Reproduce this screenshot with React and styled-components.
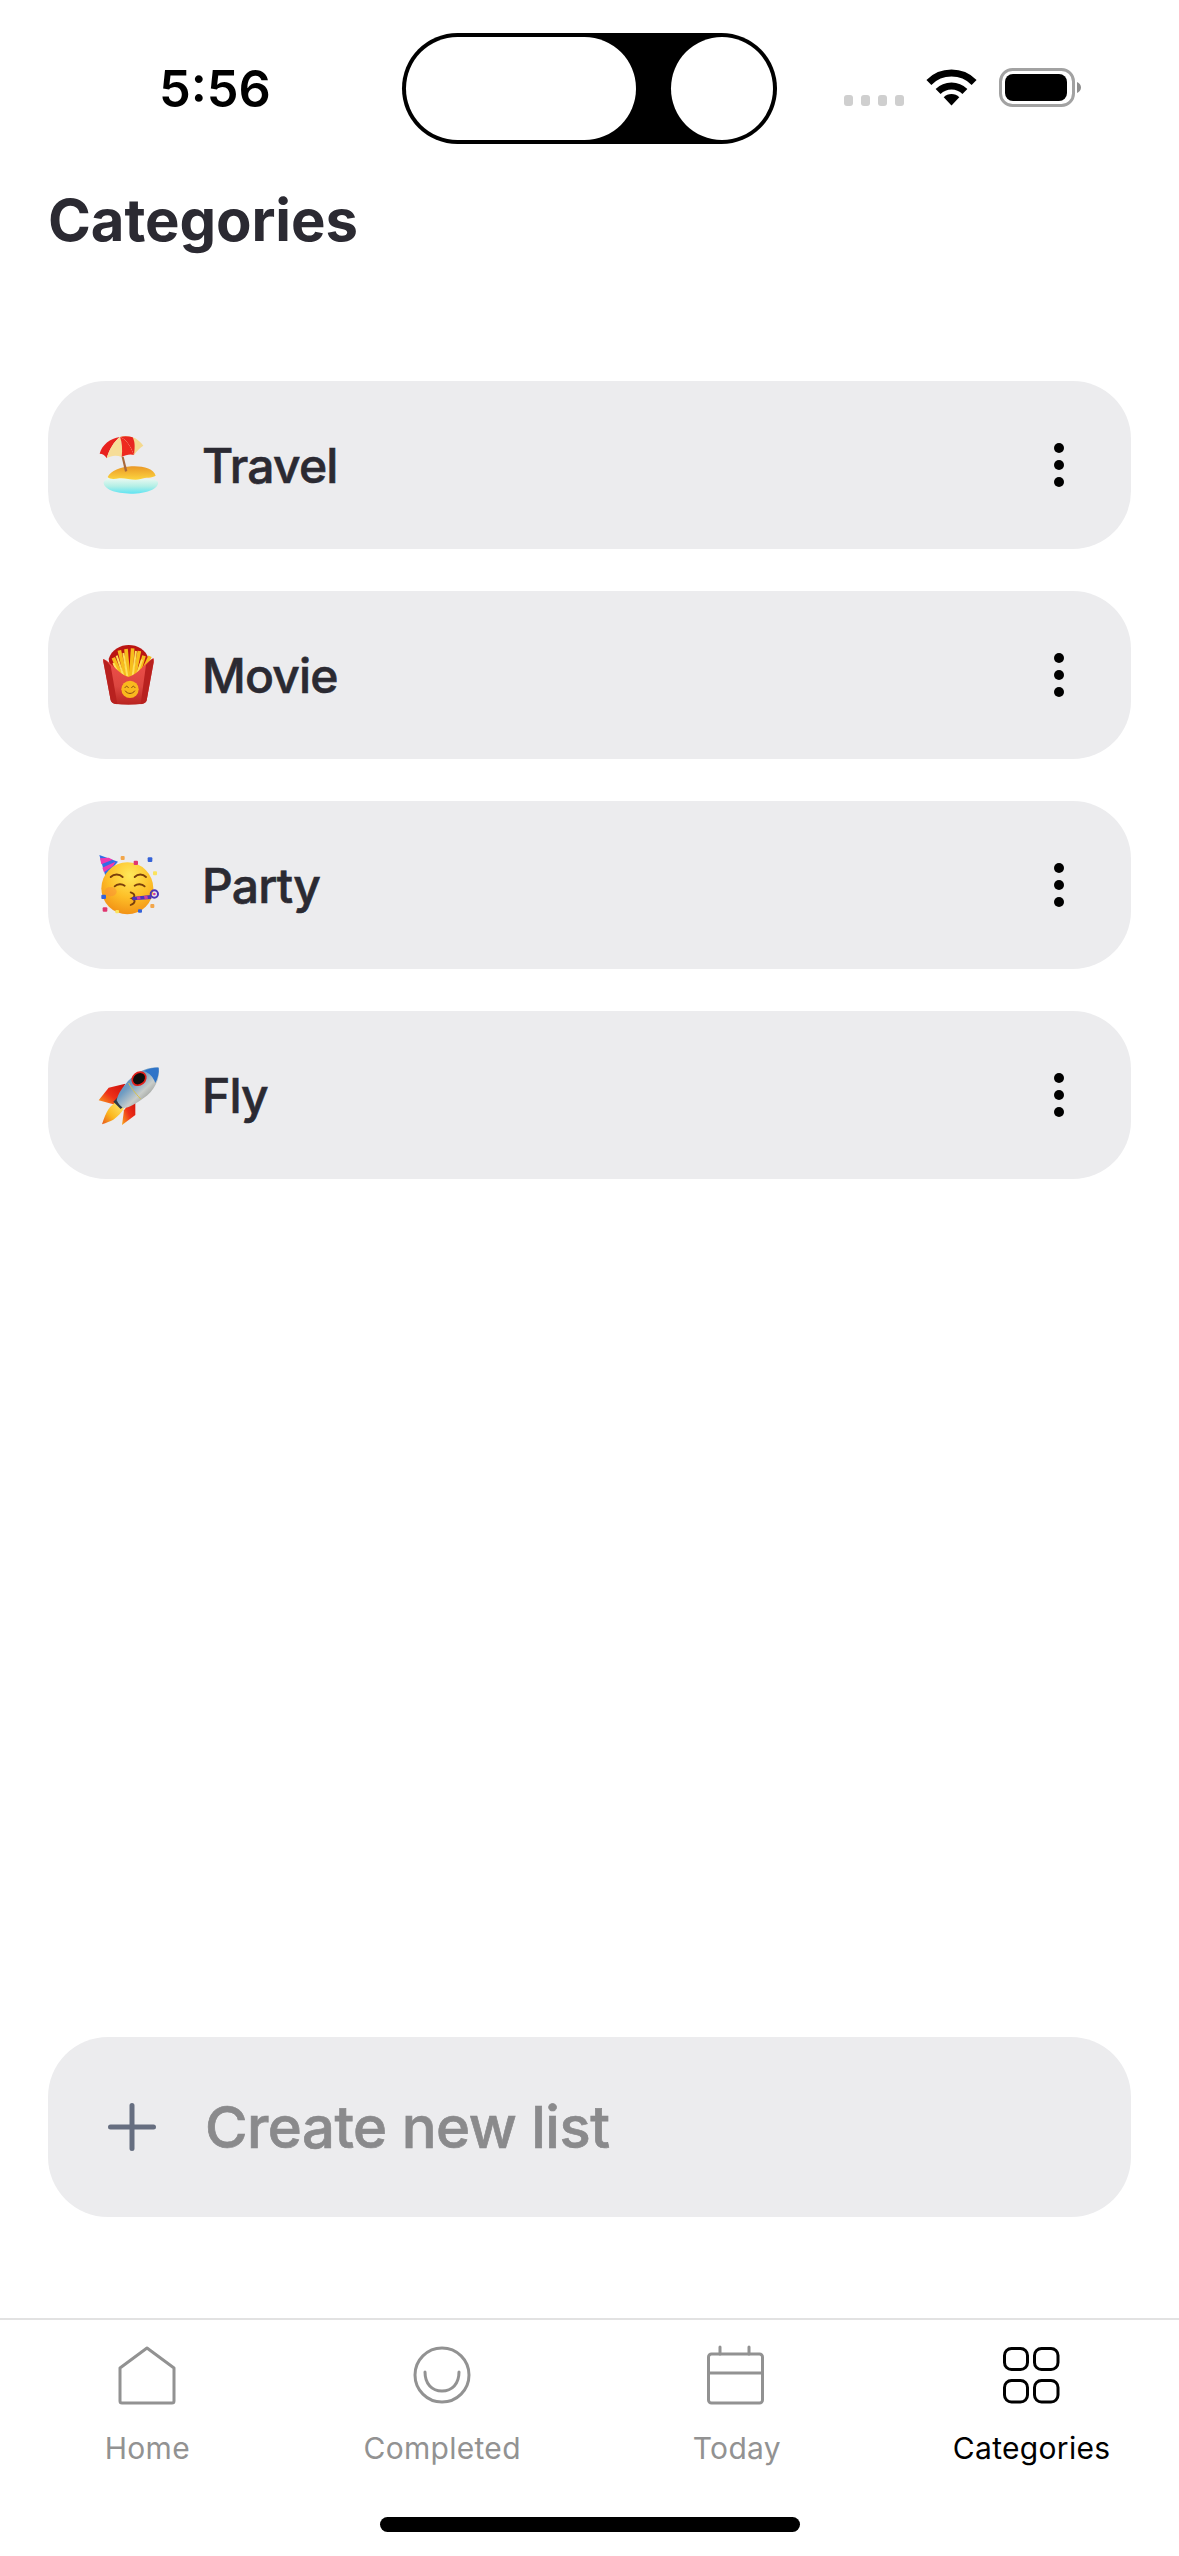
import React from "react";
import styled, { createGlobalStyle } from "styled-components";

const GlobalStyle = createGlobalStyle`
  html, body {
    margin: 0;
    padding: 0;
    background: #ffffff;
  }
  * {
    box-sizing: border-box;
  }
`;

const Page = styled.div`
  width: 1179px;
  height: 2556px;
  display: flex;
  flex-direction: column;
  background: #ffffff;
  font-family: Inter, "Liberation Sans", sans-serif;
  overflow: hidden;
`;

const StatusBar = styled.div`
  display: grid;
  grid-template-columns: 402px 375px 402px;
  height: 111px;
  margin-top: 33px;
  flex-shrink: 0;
`;

const Time = styled.div`
  align-self: center;
  padding-left: 159px;
  font-size: 50.5px;
  font-weight: 600;
  line-height: 60px;
  color: #000000;
`;

const Island = styled.div`
  display: flex;
  justify-content: space-between;
  padding: 4px;
  border-radius: 56px;
  background: #000000;
`;

const IslandPill = styled.div`
  width: 230px;
  border-radius: 52px;
  background: #ffffff;
`;

const IslandDot = styled.div`
  width: 102px;
  border-radius: 50%;
  background: #ffffff;
`;

const StatusIcons = styled.div`
  display: flex;
  align-items: flex-end;
  justify-content: flex-end;
  padding: 0 98px 37px 0;
`;

const Signal = styled.div`
  display: flex;
  gap: 8px;
  margin-right: 22px;
  margin-bottom: 1px;
`;

const SignalBar = styled.span`
  width: 9px;
  height: 11px;
  border-radius: 3px;
  background: #cfcfcf;
`;

const Wifi = styled.svg`
  width: 51px;
  height: 37px;
  margin-right: 22px;
  margin-bottom: 1px;
  display: block;
`;

const Battery = styled.svg`
  width: 82px;
  height: 39px;
  display: block;
`;

const Title = styled.h1`
  margin: 41px 0 0 48px;
  font-size: 58px;
  font-weight: 700;
  line-height: 70px;
  letter-spacing: -0.1px;
  color: #2b2a32;
`;

const CardList = styled.div`
  flex: 1;
  display: flex;
  flex-direction: column;
  gap: 42px;
  margin-top: 126px;
  padding: 0 48px;
`;

const Card = styled.div`
  display: flex;
  align-items: center;
  height: 168px;
  padding: 0 67px 0 42px;
  border-radius: 58px;
  background: #ececee;
`;

const EmojiSvg = styled.svg`
  width: 80px;
  height: 80px;
  display: block;
  flex-shrink: 0;
`;

const CardName = styled.span`
  margin-left: 32px;
  font-size: 48px;
  font-weight: 500;
  letter-spacing: -0.8px;
  -webkit-text-stroke: 0.6px currentColor;
  color: #2b2a32;
`;

const More = styled.div`
  display: flex;
  flex-direction: column;
  gap: 7px;
  margin-left: auto;
`;

const MoreDot = styled.span`
  width: 10px;
  height: 10px;
  border-radius: 50%;
  background: #000000;
`;

const CreateButton = styled.div`
  display: flex;
  align-items: center;
  gap: 49px;
  height: 180px;
  margin: 0 48px 101px;
  padding-left: 60px;
  border-radius: 60px;
  background: #ececee;
  flex-shrink: 0;
`;

const PlusIcon = styled.svg`
  width: 48px;
  height: 48px;
  display: block;
`;

const CreateLabel = styled.span`
  font-size: 58px;
  font-weight: 500;
  letter-spacing: -0.5px;
  -webkit-text-stroke: 0.7px currentColor;
  color: #8a8a8c;
`;

const TabBar = styled.div`
  height: 238px;
  display: flex;
  flex-direction: column;
  align-items: center;
  padding-top: 25px;
  border-top: 2px solid #e2e2e2;
  flex-shrink: 0;
`;

const Tabs = styled.div`
  width: 100%;
  display: grid;
  grid-template-columns: repeat(4, 1fr);
`;

const Tab = styled.div`
  display: flex;
  flex-direction: column;
  align-items: center;
  gap: 25px;
  color: ${(props) => (props.$active ? "#000000" : "#929292")};
`;

const TabIcon = styled.svg`
  width: 60px;
  height: 60px;
  display: block;
  fill: none;
  stroke: currentColor;
  stroke-width: 3;
  stroke-linejoin: round;
  stroke-linecap: round;
`;

const TabLabel = styled.span`
  font-size: 30px;
  line-height: 36px;
  letter-spacing: 0.3px;
`;

const HomeIndicator = styled.div`
  width: 420px;
  height: 15px;
  margin-top: 51px;
  border-radius: 8px;
  background: #000000;
`;

const BeachEmoji = () => (
  <EmojiSvg viewBox="0 0 240 240">
    <defs>
      <linearGradient id="beachSea" x1="0" y1="0" x2="0" y2="1">
        <stop offset="0" stopColor="#f4fbf4" />
        <stop offset="0.55" stopColor="#b4efe6" />
        <stop offset="1" stopColor="#5fe4f2" />
      </linearGradient>
      <linearGradient id="beachSand" x1="0" y1="0" x2="0" y2="1">
        <stop offset="0" stopColor="#ea9826" />
        <stop offset="1" stopColor="#fcd43f" />
      </linearGradient>
    </defs>
    <path d="M41 172C48 156 70 152 122 160C160 166 190 156 204 170C208 190 172 206 122 206C76 206 40 192 41 172Z" fill="url(#beachSea)" />
    <path d="M53 156C62 138 92 126 124 124C156 122 192 130 197 152C186 160 168 156 152 162C130 168 108 158 88 160C74 162 60 164 53 156Z" fill="url(#beachSand)" />
    <path d="M95 96L101 95L112 138L105 140Z" fill="#a9683a" />
    <path d="M29 86C36 60 60 40 90 36C72 50 58 72 50 100C46 92 38 86 29 86Z" fill="#e8211e" />
    <path d="M50 100C58 72 72 50 90 36C96 52 98 74 95 96C80 90 62 92 50 100Z" fill="#f6dd98" />
    <path d="M90 36C108 42 122 62 132 90C120 86 106 90 95 96C98 74 96 52 90 36Z" fill="#ee2a1f" />
    <path d="M90 36C104 30 124 34 136 40C148 48 154 54 160 62C150 68 140 78 132 90C122 62 108 42 90 36Z" fill="#f4d98f" />
    <path d="M90 36C102 32 116 33 128 37C134 50 136 60 132 90C122 62 108 42 90 36Z" fill="#e8251f" />
  </EmojiSvg>
);

const FriesEmoji = () => (
  <EmojiSvg viewBox="0 0 240 240">
    <defs>
      <linearGradient id="friesBox" x1="0" y1="0" x2="0" y2="1">
        <stop offset="0" stopColor="#f0504a" />
        <stop offset="0.6" stopColor="#dc4640" />
        <stop offset="1" stopColor="#b92420" />
      </linearGradient>
    </defs>
    <path d="M56 72C64 44 92 30 116 30C142 30 168 44 176 72L170 110H62Z" fill="#bb1512" />
    <g stroke="#f6bd1c" strokeWidth="11" strokeLinecap="butt">
      <path d="M60 92L86 130" />
      <path d="M70 68L98 132" />
      <path d="M88 46L108 130" />
      <path d="M108 42L116 132" />
      <path d="M128 40L122 132" />
      <path d="M148 48L132 130" />
      <path d="M162 62L142 130" />
      <path d="M180 64L150 128" />
    </g>
    <g stroke="#fde05a" strokeWidth="6" strokeLinecap="butt">
      <path d="M80 62L102 128" />
      <path d="M100 54L112 124" />
      <path d="M138 48L128 124" />
      <path d="M156 74L138 126" />
      <path d="M70 84L90 126" />
    </g>
    <path d="M40 72C66 82 86 118 115 126C146 118 164 84 190 70C192 72 192 76 191 82L170 196C169 202 164 205 158 206C130 210 100 210 74 206C68 205 64 202 62 196L40 80C39 76 39 74 40 72Z" fill="url(#friesBox)" />
    <path d="M40 72C48 76 55 84 62 92L82 208L74 206C68 205 64 202 62 196L40 80Z" fill="#b8211f" />
    <path d="M190 70C182 75 175 82 168 90L152 208L158 206C164 205 169 202 170 196L191 82Z" fill="#b8211f" />
    <circle cx="120" cy="163" r="26" fill="#f9b91e" />
    <g fill="none" stroke="#8a4a12" strokeWidth="3" strokeLinecap="round">
      <path d="M105 158C108 152 112 152 115 158" />
      <path d="M125 158C128 152 132 152 135 158" />
      <path d="M106 168C112 178 128 178 134 168" />
    </g>
  </EmojiSvg>
);

const PartyEmoji = () => (
  <EmojiSvg viewBox="0 0 240 240">
    <defs>
      <radialGradient id="partyFace" cx="0.55" cy="0.25" r="0.85">
        <stop offset="0" stopColor="#ffe95a" />
        <stop offset="0.5" stopColor="#fdbf28" />
        <stop offset="1" stopColor="#ef8510" />
      </radialGradient>
    </defs>
    <path d="M28 30L84 50L46 92Z" fill="#2f6fe6" />
    <path d="M30 40L56 38L68 44L34 58Z" fill="#ee3ab0" />
    <path d="M37 68L76 50L70 62L42 82Z" fill="#ee3ab0" />
    <circle cx="112" cy="130" r="78" fill="url(#partyFace)" />
    <ellipse cx="62" cy="140" rx="18" ry="14" fill="#f98a3a" opacity="0.45" />
    <g fill="none" stroke="#7a3f0c" strokeWidth="5.500" strokeLinecap="round">
      <path d="M62 96C72 86 88 86 98 96" />
      <path d="M134 96C144 86 158 86 168 96" />
      <path d="M74 124C82 116 96 116 104 122" />
      <path d="M134 122C142 116 156 116 164 124" />
      <path d="M122 142C136 146 136 156 126 160C136 164 138 174 122 180" />
    </g>
    <path d="M126 156L182 150L184 162L128 166Z" fill="#4c35b8" />
    <path d="M140 155L150 154L152 163L142 164ZM162 153L172 152L174 161L164 162Z" fill="#d13a9e" />
    <circle cx="193" cy="147" r="11" fill="none" stroke="#4c35b8" strokeWidth="6" />
    <circle cx="193" cy="147" r="4" fill="#d13a9e" />
    <rect x="173" y="37" width="14" height="14" rx="3" fill="#3462d8" />
    <rect x="131" y="47" width="13" height="13" rx="3" fill="#e0356f" />
    <rect x="92" y="33" width="12" height="12" rx="3" fill="#f2a64a" />
    <rect x="189" y="79" width="12" height="12" rx="3" fill="#fbe35c" />
    <rect x="34" y="149" width="14" height="13" rx="3" fill="#3462d8" />
    <rect x="38" y="187" width="14" height="13" rx="3" fill="#e0356f" />
    <rect x="76" y="195" width="11" height="10" rx="3" fill="#fbe35c" />
    <rect x="144" y="193" width="12" height="10" rx="3" fill="#3462d8" />
    <rect x="181" y="177" width="12" height="12" rx="3" fill="#f2a64a" />
  </EmojiSvg>
);

const RocketEmoji = () => (
  <EmojiSvg viewBox="0 0 240 240">
    <defs>
      <linearGradient id="rocketBody" x1="0" y1="0" x2="1" y2="1">
        <stop offset="0" stopColor="#3f7fc6" />
        <stop offset="0.38" stopColor="#6f9cc2" />
        <stop offset="0.6" stopColor="#c9cdca" />
        <stop offset="0.82" stopColor="#8d8f8c" />
        <stop offset="1" stopColor="#454746" />
      </linearGradient>
      <linearGradient id="rocketFin" x1="1" y1="0" x2="0" y2="1">
        <stop offset="0" stopColor="#c90f0c" />
        <stop offset="0.55" stopColor="#ee2f18" />
        <stop offset="1" stopColor="#f9a81c" />
      </linearGradient>
      <linearGradient id="rocketFlame" x1="1" y1="0" x2="0" y2="1">
        <stop offset="0" stopColor="#fff07a" />
        <stop offset="0.6" stopColor="#fbb81f" />
        <stop offset="1" stopColor="#e8571a" />
      </linearGradient>
    </defs>
    <path d="M106 86L56 98L26 136L78 150Z" fill="url(#rocketFin)" />
    <path d="M136 120L102 166L96 210L136 180Z" fill="url(#rocketFin)" />
    <path d="M80 140C60 150 48 170 36 208C50 202 60 200 70 194C84 184 96 172 102 160Z" fill="url(#rocketFlame)" />
    <path d="M70 140L84 126L106 150L92 162Z" fill="#2f3a46" />
    <path d="M206 38C212 72 192 108 160 130C138 146 118 158 100 160C92 154 84 146 80 136C84 114 98 98 114 78C140 52 172 34 206 38Z" fill="url(#rocketBody)" />
    <path d="M206 38C208 52 204 70 196 84C190 66 178 54 162 48C176 42 192 37 206 38Z" fill="#2f74c8" />
    <path d="M116 84C124 100 134 112 152 132" fill="none" stroke="#d8c24a" strokeWidth="3" />
    <ellipse cx="147" cy="71" rx="22" ry="18" transform="rotate(-40 147 71)" fill="#0d0d0d" stroke="#e21f1a" strokeWidth="5" />
  </EmojiSvg>
);

const categories = [
  { name: "Travel", Emoji: BeachEmoji },
  { name: "Movie", Emoji: FriesEmoji },
  { name: "Party", Emoji: PartyEmoji },
  { name: "Fly", Emoji: RocketEmoji },
];

const HomeIcon = () => (
  <TabIcon viewBox="0 0 60 60">
    <path d="M30 3L57 23V56C57 57.500 56 58 55 58H5C4 58 3 57.500 3 56V23Z" />
  </TabIcon>
);

const CompletedIcon = () => (
  <TabIcon viewBox="0 0 60 60">
    <circle cx="30" cy="30" r="27" />
    <path d="M13 27C13 39 20 46 30 46C40 46 47 39 47 27" />
  </TabIcon>
);

const TodayIcon = () => (
  <TabIcon viewBox="0 0 60 60">
    <rect x="1.500" y="9" width="54" height="49" rx="3" />
    <path d="M1.500 28H55.500M13 2V9M42 2V9" />
  </TabIcon>
);

const CategoriesIcon = () => (
  <TabIcon viewBox="0 0 60 60">
    <rect x="2.500" y="3.500" width="23" height="21" rx="7" />
    <rect x="32.500" y="3.500" width="23.500" height="21" rx="7" />
    <rect x="2.500" y="35.500" width="23" height="21.500" rx="7" />
    <rect x="32.500" y="35.500" width="23.500" height="21.500" rx="7" />
  </TabIcon>
);

const tabs = [
  { label: "Home", Icon: HomeIcon },
  { label: "Completed", Icon: CompletedIcon },
  { label: "Today", Icon: TodayIcon },
  { label: "Categories", Icon: CategoriesIcon, active: true },
];

const App = () => {
  return (
    <Page>
      <GlobalStyle />
      <StatusBar>
        <Time>5:56</Time>
        <Island>
          <IslandPill />
          <IslandDot />
        </Island>
        <StatusIcons>
          <Signal>
            <SignalBar />
            <SignalBar />
            <SignalBar />
            <SignalBar />
          </Signal>
          <Wifi viewBox="0 0 51 37">
            <path d="M2.900 13.400A32 32 0 0 1 48.100 13.400" fill="none" stroke="#000" strokeWidth="7" />
            <path d="M12.100 22.600A19 19 0 0 1 38.900 22.600" fill="none" stroke="#000" strokeWidth="7" />
            <path d="M25.500 36.500L17.700 28.200A11 11 0 0 1 33.300 28.200Z" fill="#000" />
          </Wifi>
          <Battery viewBox="0 0 82 39">
            <rect x="1.500" y="1.500" width="73" height="36" rx="12" fill="none" stroke="#a2a2a2" strokeWidth="3" />
            <rect x="6" y="6" width="62" height="27" rx="8" fill="#000" />
            <path d="M78 14C80.500 15 82 17 82 19.500C82 22 80.500 24 78 25Z" fill="#8e8e8e" />
          </Battery>
        </StatusIcons>
      </StatusBar>
      <Title>Categories</Title>
      <CardList>
        {categories.map(({ name, Emoji }) => (
          <Card key={name}>
            <Emoji />
            <CardName>{name}</CardName>
            <More>
              <MoreDot />
              <MoreDot />
              <MoreDot />
            </More>
          </Card>
        ))}
      </CardList>
      <CreateButton>
        <PlusIcon viewBox="0 0 48 48">
          <path d="M24 2.500V45.500M2.500 24H45.500" fill="none" stroke="#666e80" strokeWidth="5" strokeLinecap="round" />
        </PlusIcon>
        <CreateLabel>Create new list</CreateLabel>
      </CreateButton>
      <TabBar>
        <Tabs>
          {tabs.map(({ label, Icon, active }) => (
            <Tab key={label} $active={active}>
              <Icon />
              <TabLabel>{label}</TabLabel>
            </Tab>
          ))}
        </Tabs>
        <HomeIndicator />
      </TabBar>
    </Page>
  );
};

export default App;
